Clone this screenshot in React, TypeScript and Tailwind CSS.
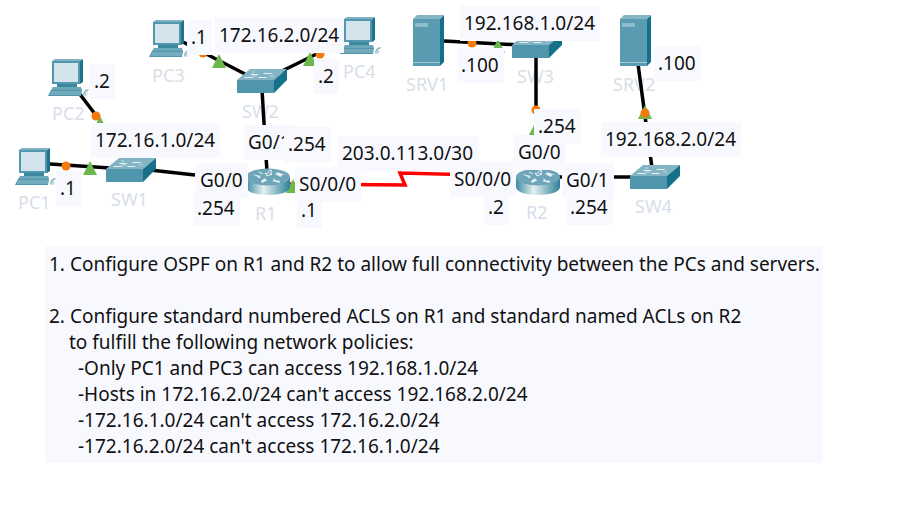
const Pc = ({ className }: { className: string }) => (
  <svg className={`absolute ${className}`} width="43" height="39" viewBox="0 0 43 39">
    <path d="M5 2h28v23H5z" fill="#5297ad" />
    <path d="M33 2l3-2v23l-3 2z" fill="#1f7389" />
    <path d="M5 2l3-2h28l-3 2z" fill="#7fb2c3" />
    <path d="M7 4h24v19H7z" fill="#d3e4ec" />
    <path d="M10 25h20v3H10z" fill="#3d879e" />
    <path d="M6 28h28l1 3H4z" fill="#6aa7ba" />
    <path d="M1 37l3-6h31l-1 6z" fill="#4f95ab" />
    <path d="M4 33h30M3 35h31" stroke="#b9d6df" strokeWidth="0.7" />
    <path d="M36 36c0-3 2-6 6-6l-1 2c-2 0-3 2-3 4z" fill="#8fb9c6" />
    <path d="M36 37l3-4 2 1-2 3z" fill="#c4dae2" />
  </svg>
)

const Switch = ({ className }: { className: string }) => (
  <svg className={`absolute ${className}`} width="50" height="24" viewBox="0 0 50 24">
    <path d="M13 0h37L37 11H0z" fill="#82b4c4" />
    <path d="M0 11h37v13H0z" fill="#4f95ab" />
    <path d="M37 11L50 0v11L37 24z" fill="#17708a" />
    <path d="M14 5h8l-2 1h-7zM27 4h9l-2 1h-8zM8 8h9l-2 1H7zM22 8h8l-1 1h-8z" fill="#e6f0f4" />
    <path d="M18 3h-3M33 7h4M15 7h5" stroke="#d6e6ec" strokeWidth="0.8" />
  </svg>
)

const Router = ({ className }: { className: string }) => (
  <svg className={`absolute ${className}`} width="44" height="28" viewBox="0 0 44 28">
    <path d="M0 9v10c0 5 10 8 22 8s22-3 22-8V9z" fill="url(#routerSide)" />
    <ellipse cx="22" cy="9" rx="22" ry="8.5" fill="#6ea5b8" />
    <path d="M6 6l9 2-2 1 3 1-4 0 0-1zM31 4l8 3-3 0-1 2-6-3 2-1zM15 13l4-3 1 2 2 0-6 3zM27 10l4 3 2-1 1 3-8-2 2-1z" fill="#e8f1f5" />
    <path d="M24 2l-3 4-2-1 2 3 5-2-2 0 2-3zM13 4l4 2" stroke="#e8f1f5" strokeWidth="1" fill="none" />
  </svg>
)

const Server = ({ className }: { className: string }) => (
  <svg className={`absolute ${className}`} width="32" height="52" viewBox="0 0 32 52">
    <path d="M0 4h27v47H0z" fill="#5a9bb1" />
    <path d="M27 4l4-4v47l-4 4z" fill="#14708a" />
    <path d="M4 0h27l-4 4H0z" fill="#83b5c5" />
    <path d="M2 8h13v4H2z" fill="#8fbccb" />
    <path d="M0 47h27v1H0z" fill="#a6cbd7" />
  </svg>
)

const Label = ({ className, children }: { className: string; children: string }) => (
  <div className={`absolute bg-[#f8f9ff] py-[5px] pl-[4px] pr-[5px] text-[19px] leading-[25px] text-[#111] ${className}`}>
    {children}
  </div>
)

const Name = ({ className, children }: { className: string; children: string }) => (
  <div className={`absolute text-[18px] leading-[24px] text-[#d8dee9] ${className}`}>{children}</div>
)

const Dot = ({ x, y }: { x: number; y: number }) => <circle cx={x} cy={y} r="4.5" fill="#f57a0c" />

const Tri = ({ x, y }: { x: number; y: number }) => (
  <path d={`M${x} ${y - 8}l7 14h-14z`} fill="#6cb84c" />
)

function Topology() {
  return (
    <div className="relative h-[246px] w-full overflow-hidden">
      <Name className="left-[18px] top-[190px]">PC1</Name>
      <Name className="left-[52px] top-[101px]">PC2</Name>
      <Name className="left-[152px] top-[63px]">PC3</Name>
      <Name className="left-[343px] top-[59px]">PC4</Name>
      <Name className="left-[111px] top-[187px]">SW1</Name>
      <Name className="left-[242px] top-[99px]">SW2</Name>
      <Name className="left-[517px] top-[64px]">SW3</Name>
      <Name className="left-[635px] top-[194px]">SW4</Name>
      <Name className="left-[406px] top-[72px]">SRV1</Name>
      <Name className="left-[613px] top-[72px]">SRV2</Name>
      <Name className="left-[255px] top-[201px]">R1</Name>
      <Name className="left-[526px] top-[200px]">R2</Name>

      <svg className="absolute left-0 top-0" width="908" height="246">
        <defs>
          <linearGradient id="routerSide" x1="0" x2="1" y1="0" y2="0">
            <stop offset="0" stopColor="#3f8ba1" />
            <stop offset="0.4" stopColor="#e4f0f3" />
            <stop offset="1" stopColor="#2f8098" />
          </linearGradient>
        </defs>
        <g stroke="#000" strokeWidth="3.5" fill="none">
          <path d="M50 164L110 168" />
          <path d="M79 93L98 118" />
          <path d="M150 170L195 175" />
          <path d="M183 42L245 74" />
          <path d="M345 40L280 72" />
          <path d="M262 90L267 172" />
          <path d="M444 41L520 45" />
          <path d="M536 55V112" />
          <path d="M638 64L652 168" />
          <path d="M558 177H634" />
        </g>
        <path d="M285 184L405 185L400 173L516 176" stroke="#f00" strokeWidth="3.5" fill="none" />
        <Tri x={90} y={169} />
        <Dot x={66} y={166} />
        <Tri x={100} y={124} />
        <Dot x={96} y={116} />
        <Tri x={219} y={62} />
        <Dot x={203} y={53} />
        <Dot x={320} y={54} />
        <Tri x={310} y={60} />
        <Dot x={472} y={43} />
        <Tri x={498} y={47} />
        <Dot x={536} y={110} />
        <Tri x={534} y={133} />
        <Tri x={645} y={113} />
        <Dot x={645} y={113} />
        <Tri x={293} y={187} />
      </svg>

      <Pc className="left-[14px] top-[148px]" />
      <Pc className="left-[47px] top-[59px]" />
      <Pc className="left-[148px] top-[20px]" />
      <Pc className="left-[339px] top-[17px]" />
      <Switch className="left-[106px] top-[158px]" />
      <Switch className="left-[237px] top-[69px]" />
      <Switch className="left-[512px] top-[34px]" />
      <Switch className="left-[630px] top-[165px]" />
      <Router className="left-[246px] top-[168px]" />
      <Router className="left-[516px] top-[168px]" />
      <Server className="left-[413px] top-[15px]" />
      <Server className="left-[620px] top-[15px]" />

      <Label className="left-[91px] top-[123px]">172.16.1.0/24</Label>
      <Label className="left-[90px] top-[64px]">.2</Label>
      <Label className="left-[187px] top-[20px]">.1</Label>
      <Label className="left-[215px] top-[18px]">172.16.2.0/24</Label>
      <Label className="left-[314px] top-[59px]">.2</Label>
      <Label className="left-[56px] top-[171px]">.1</Label>
      <Label className="left-[196px] top-[163px]">G0/0</Label>
      <Label className="left-[193px] top-[191px]">.254</Label>
      <Label className="left-[244px] top-[125px]">G0/1</Label>
      <Label className="left-[284px] top-[127px]">.254</Label>
      <Label className="left-[295px] top-[167px]">S0/0/0</Label>
      <Label className="left-[297px] top-[193px]">.1</Label>
      <Label className="left-[338px] top-[136px]">203.0.113.0/30</Label>
      <Label className="left-[450px] top-[162px]">S0/0/0</Label>
      <Label className="left-[484px] top-[190px]">.2</Label>
      <Label className="left-[514px] top-[135px]">G0/0</Label>
      <Label className="left-[534px] top-[109px]">.254</Label>
      <Label className="left-[562px] top-[163px]">G0/1</Label>
      <Label className="left-[566px] top-[190px]">.254</Label>
      <Label className="left-[460px] top-[6px]">192.168.1.0/24</Label>
      <Label className="left-[457px] top-[48px]">.100</Label>
      <Label className="left-[654px] top-[46px]">.100</Label>
      <Label className="left-[601px] top-[122px]">192.168.2.0/24</Label>
    </div>
  )
}

export default function App() {
  return (
    <div className="h-[532px] w-[908px] overflow-hidden bg-white font-['Noto_Sans',sans-serif]">
      <Topology />
      <div className="ml-[45px] h-[217px] w-[778px] bg-[#f8f9ff] pl-1 pt-[5px] text-[19px] leading-[26px] text-[#111]">
        <p>1. Configure OSPF on R1 and R2 to allow full connectivity between the PCs and servers.</p>
        <p className="mt-[26px]">2. Configure standard numbered ACLS on R1 and standard named ACLs on R2</p>
        <p className="pl-[20px]">to fulfill the following network policies:</p>
        <p className="pl-[29px]">-Only PC1 and PC3 can access 192.168.1.0/24</p>
        <p className="pl-[29px]">-Hosts in 172.16.2.0/24 can't access 192.168.2.0/24</p>
        <p className="pl-[29px]">-172.16.1.0/24 can't access 172.16.2.0/24</p>
        <p className="pl-[29px]">-172.16.2.0/24 can't access 172.16.1.0/24</p>
      </div>
    </div>
  )
}
